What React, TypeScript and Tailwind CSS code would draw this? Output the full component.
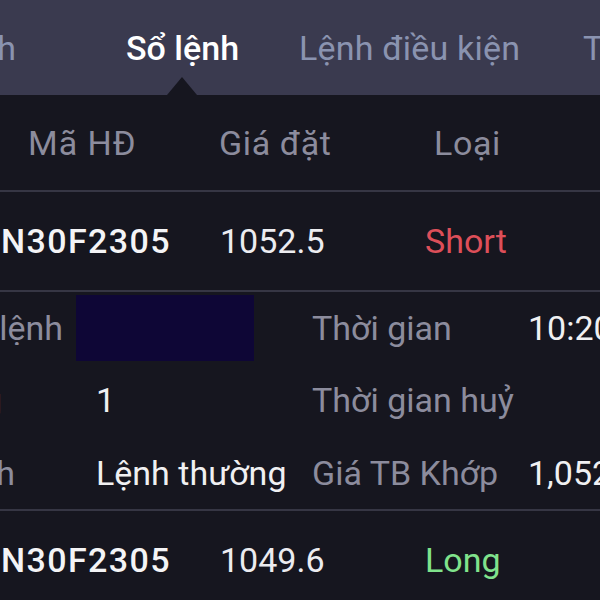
import { FC, ReactNode } from "react";

const font = { fontFamily: "Roboto, 'Noto Sans', sans-serif" };

type Detail = {
  label: string;
  value?: string;
  masked?: boolean;
  label2: string;
  value2?: string;
};

const details: Detail[] = [
  { label: "Số hiệu lệnh", masked: true, label2: "Thời gian", value2: "10:20:15" },
  { label: "Khối lượng", value: "1", label2: "Thời gian huỷ", value2: "" },
  { label: "Loại lệnh", value: "Lệnh thường", label2: "Giá TB Khớp", value2: "1,052.5" },
];

const Clip: FC<{ w: string; children: ReactNode; className?: string }> = ({ w, children, className }) => (
  <div className={`${w} shrink-0 flex justify-end overflow-hidden whitespace-nowrap ${className ?? ""}`}>
    <span>{children}</span>
  </div>
);

const OrderRow: FC<{ code: string; price: string; side: "Short" | "Long" }> = ({ code, price, side }) => (
  <div className="flex items-center h-[98px] text-[34px] shrink-0">
    <Clip w="w-[171px]" className="font-medium text-[#f4f4f6] tracking-[1.4px]">
      {code}
    </Clip>
    <div className="w-[254px] shrink-0 pl-[49px] text-[#ececf0]">{price}</div>
    <div className={`shrink-0 whitespace-nowrap ${side === "Short" ? "text-[#dd4f59]" : "text-[#80e38c]"}`}>
      {side}
    </div>
  </div>
);

export default function App() {
  return (
    <div style={font} className="w-[600px] h-[600px] overflow-hidden bg-[#16161f] flex flex-col leading-none">
      {/* tabs */}
      <div className="h-[95px] shrink-0 bg-[#3a3a4f] flex items-center text-[34px] whitespace-nowrap">
        <Clip w="w-[16px]" className="text-[#8a93b0]">
          Đặt lệnh
        </Clip>
        <div className="relative ml-[110px] w-[112px] shrink-0 h-full flex items-center font-medium text-white">
          Sổ lệnh
          <div className="absolute bottom-0 left-[41px] w-0 h-0 border-l-[15px] border-r-[15px] border-b-[18px] border-l-transparent border-r-transparent border-b-[#16161f]" />
        </div>
        <div className="ml-[61px] w-[284px] shrink-0 text-[#8a93b0] tracking-[0.2px]">Lệnh điều kiện</div>
        <div className="text-[#8a93b0]">Theo dõi</div>
      </div>

      {/* header */}
      <div className="h-[95px] shrink-0 flex items-center text-[34px] text-[#8c8c9d] whitespace-nowrap">
        <div className="w-[219px] shrink-0 pl-[28px] tracking-[1px]">Mã HĐ</div>
        <div className="w-[215px] shrink-0 tracking-[0.6px]">Giá đặt</div>
        <div className="tracking-[0.6px]">Loại</div>
      </div>
      <div className="h-[2px] shrink-0 bg-[#363644]" />

      <OrderRow code="VN30F2305" price="1052.5" side="Short" />
      <div className="h-[2px] shrink-0 bg-[#363644]" />

      {/* details */}
      <div className="h-[217px] shrink-0 grid grid-rows-3 text-[34px] whitespace-nowrap">
        {details.map((d) => (
          <div key={d.label} className="flex items-center">
            <Clip w={d.masked ? "w-[63px]" : d.value === "1" ? "w-[2px]" : "w-[15px]"} className="text-[#8c8c9d]">
              {d.label}
            </Clip>
            <div
              className={`${d.masked ? "w-[249px] pl-[13px]" : d.value === "1" ? "w-[310px] pl-[94px]" : "w-[297px] pl-[81px]"} shrink-0 text-[#f0f0f2]`}
            >
              {d.masked ? <div className="w-[178px] h-[66px] bg-[#0e0636]" /> : d.value}
            </div>
            <div className="w-[216px] shrink-0 text-[#8c8c9d]">{d.label2}</div>
            <div className="text-[#f0f0f2]">{d.value2}</div>
          </div>
        ))}
      </div>
      <div className="h-[2px] shrink-0 bg-[#363644]" />

      <OrderRow code="VN30F2305" price="1049.6" side="Long" />
    </div>
  );
}
